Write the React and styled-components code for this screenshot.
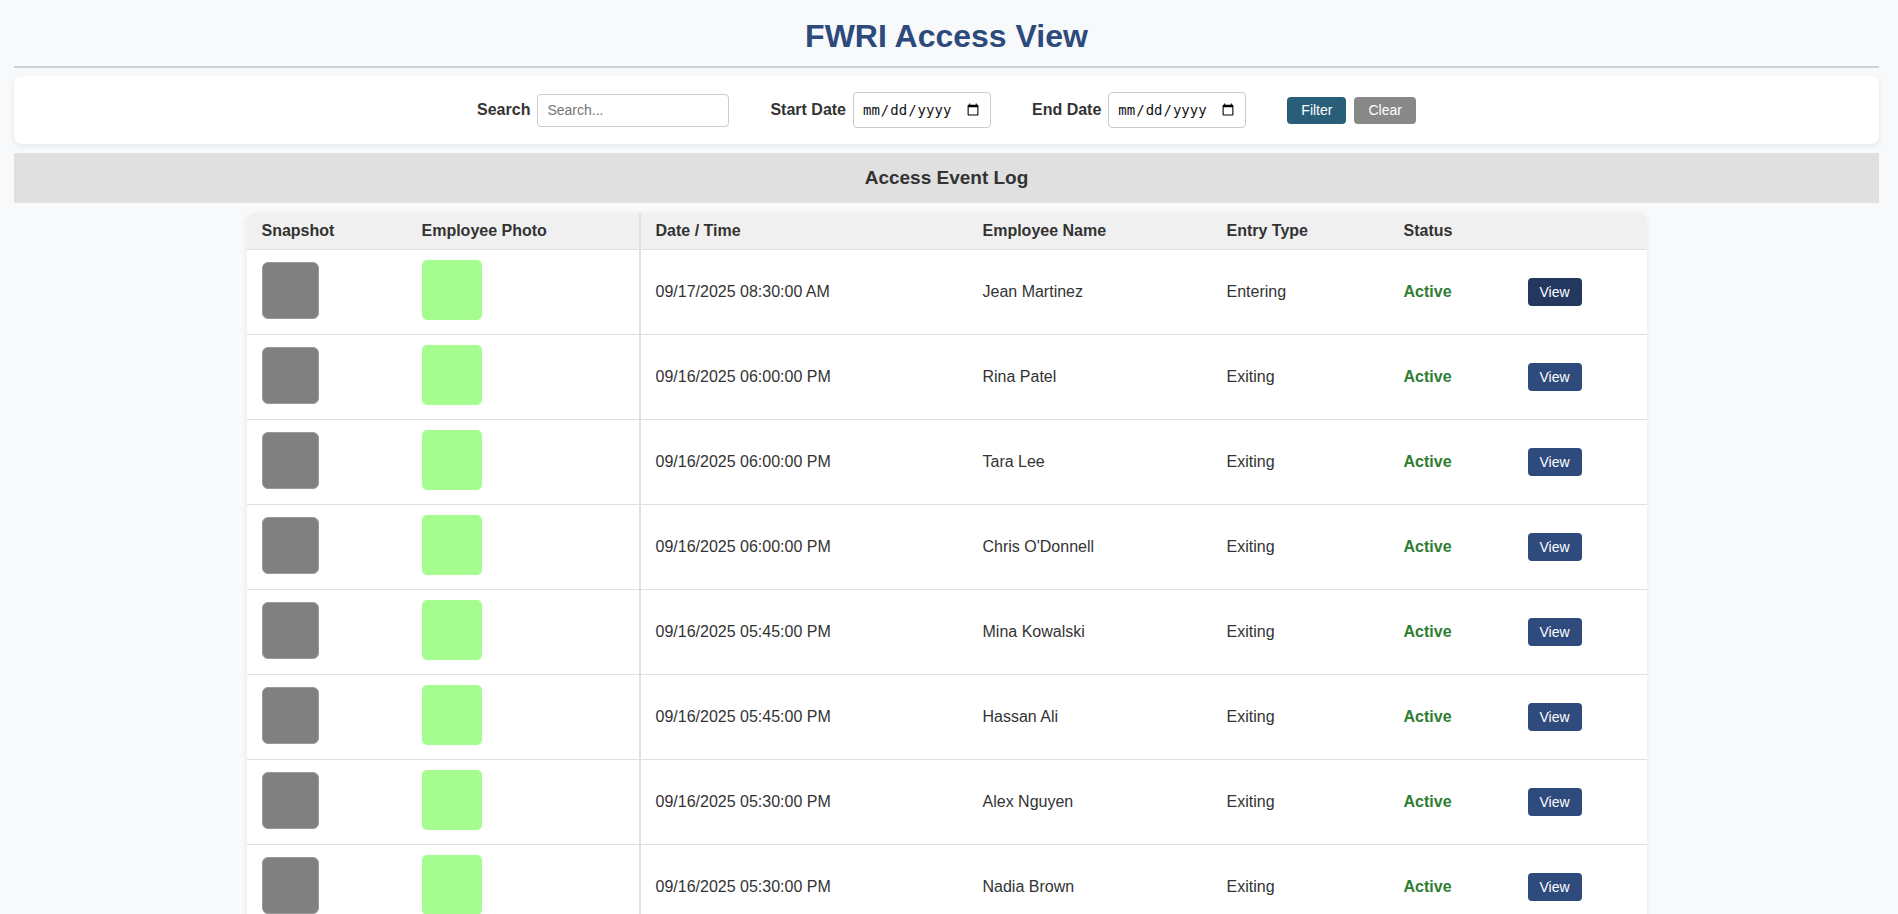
import React from "react";
import styled, { createGlobalStyle } from "styled-components";

const GlobalStyle = createGlobalStyle`
  html, body {
    margin: 0;
    padding: 0;
    background: #f8f9fa;
    font-family: "Liberation Sans", Arial, sans-serif;
    color: #333;
  }
`;

const events = [
  { time: "09/17/2025 08:30:00 AM", name: "Jean Martinez", type: "Entering" },
  { time: "09/16/2025 06:00:00 PM", name: "Rina Patel", type: "Exiting" },
  { time: "09/16/2025 06:00:00 PM", name: "Tara Lee", type: "Exiting" },
  { time: "09/16/2025 06:00:00 PM", name: "Chris O'Donnell", type: "Exiting" },
  { time: "09/16/2025 05:45:00 PM", name: "Mina Kowalski", type: "Exiting" },
  { time: "09/16/2025 05:45:00 PM", name: "Hassan Ali", type: "Exiting" },
  { time: "09/16/2025 05:30:00 PM", name: "Alex Nguyen", type: "Exiting" },
  { time: "09/16/2025 05:30:00 PM", name: "Nadia Brown", type: "Exiting" },
];

function App() {
  return (
    <Page>
      <GlobalStyle />
      <Title>FWRI Access View</Title>
      <FilterCard>
        <Field>
          <Label>Search</Label>
          <SearchInput type="text" placeholder="Search..." />
        </Field>
        <Field>
          <Label>Start Date</Label>
          <DateInput type="date" />
        </Field>
        <Field>
          <Label>End Date</Label>
          <DateInput type="date" />
        </Field>
        <Buttons>
          <ActionButton $bg="#285e78">Filter</ActionButton>
          <ActionButton $bg="#888888">Clear</ActionButton>
        </Buttons>
      </FilterCard>
      <SectionHeader>Access Event Log</SectionHeader>
      <TableWrap>
        <Table>
          <colgroup>
            <col style={{ width: 160 }} />
            <col style={{ width: 233 }} />
            <col style={{ width: 328 }} />
            <col style={{ width: 244 }} />
            <col style={{ width: 177 }} />
            <col style={{ width: 124 }} />
            <col style={{ width: 134 }} />
          </colgroup>
          <thead>
            <tr>
              <Th>Snapshot</Th>
              <Th>Employee Photo</Th>
              <Th $divider>Date / Time</Th>
              <Th>Employee Name</Th>
              <Th>Entry Type</Th>
              <Th>Status</Th>
              <Th />
            </tr>
          </thead>
          <tbody>
            {events.map((e, i) => (
              <tr key={i}>
                <Td>
                  <Snapshot />
                </Td>
                <Td>
                  <Photo />
                </Td>
                <Td $divider>{e.time}</Td>
                <Td>{e.name}</Td>
                <Td>{e.type}</Td>
                <Td>
                  <Status>Active</Status>
                </Td>
                <Td>
                  <ViewButton $focused={i === 0}>View</ViewButton>
                </Td>
              </tr>
            ))}
          </tbody>
        </Table>
      </TableWrap>
    </Page>
  );
}

export default App;

const Page = styled.div`
  padding: 0 19px 0 14px;
`;

const Title = styled.h1`
  margin: 0;
  padding: 18px 0 11px;
  text-align: center;
  font-size: 32px;
  font-weight: bold;
  color: #2c4a7c;
  border-bottom: 2px solid #d0d2d6;
`;

const FilterCard = styled.div`
  margin-top: 8px;
  background: #fff;
  border-radius: 8px;
  box-shadow: 0 2px 6px rgba(0, 0, 0, 0.08);
  padding: 16px 20px;
  display: flex;
  justify-content: center;
  align-items: center;
  gap: 41px;
`;

const Field = styled.div`
  display: flex;
  align-items: center;
  gap: 7px;
`;

const Label = styled.label`
  font-size: 16px;
  font-weight: bold;
  color: #333;
`;

const SearchInput = styled.input`
  box-sizing: border-box;
  width: 192px;
  height: 33px;
  padding: 6px 9px;
  font-family: "Liberation Sans", Arial, sans-serif;
  font-size: 14px;
  border: 1px solid #ccc;
  border-radius: 4px;
  &::placeholder {
    color: #757575;
  }
`;

const DateInput = styled.input`
  box-sizing: border-box;
  width: 138px;
  height: 36px;
  padding: 6px 8px;
  font-size: 14px;
  border: 1px solid #ccc;
  border-radius: 4px;
  background: #fff;
  color: #111;
`;

const Buttons = styled.div`
  display: flex;
  gap: 8px;
`;

const ActionButton = styled.button`
  height: 27px;
  padding: 0 14px;
  border: none;
  border-radius: 4px;
  background: ${(p) => p.$bg};
  color: #fff;
  font-family: "Liberation Sans", Arial, sans-serif;
  font-size: 14px;
  cursor: pointer;
`;

const SectionHeader = styled.h2`
  margin: 9px 0 0;
  height: 50px;
  display: flex;
  align-items: center;
  justify-content: center;
  background: #e0e0e0;
  font-size: 19px;
  font-weight: bold;
  color: #333;
`;

const TableWrap = styled.div`
  width: 1400px;
  margin: 10px auto 0;
  border-radius: 8px;
  overflow: hidden;
  background: #fff;
  box-shadow: 0 2px 6px rgba(0, 0, 0, 0.08);
`;

const Table = styled.table`
  width: 100%;
  table-layout: fixed;
  border-collapse: collapse;
  font-size: 16px;
`;

const Th = styled.th`
  background: #f0f0f0;
  text-align: left;
  padding: 9px 15px;
  font-weight: bold;
  color: #333;
  border-bottom: 1px solid #e0e0e0;
  border-left: ${(p) => (p.$divider ? "2px solid #e0e0e0" : "none")};
`;

const Td = styled.td`
  padding: 12px 15px;
  vertical-align: middle;
  color: #333;
  border-bottom: 1px solid #e0e0e0;
  border-left: ${(p) => (p.$divider ? "2px solid #e0e0e0" : "none")};
`;

const Snapshot = styled.div`
  width: 57px;
  height: 57px;
  margin: -1px 0 3px;
  box-sizing: border-box;
  border-radius: 6px;
  background: #808080;
  border: 1px solid #9a9a9a;
`;

const Photo = styled.div`
  width: 60px;
  height: 60px;
  margin: -2px 0 2px;
  border-radius: 5px;
  background: #a6fd8f;
`;

const Status = styled.span`
  font-weight: bold;
  color: #2e7d32;
`;

const ViewButton = styled.button`
  width: 54px;
  height: 28px;
  border: none;
  border-radius: 4px;
  background: ${(p) => (p.$focused ? "#24375f" : "#2f4a7d")};
  color: #fff;
  font-family: "Liberation Sans", Arial, sans-serif;
  font-size: 14px;
  cursor: pointer;
`;
